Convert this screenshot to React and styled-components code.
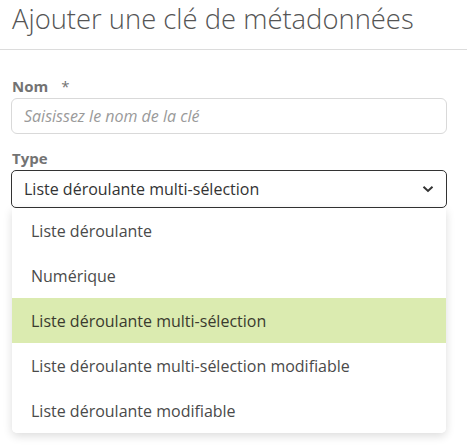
import React, { useState } from "react";
import styled, { createGlobalStyle } from "styled-components";

const GlobalStyle = createGlobalStyle`
  html, body {
    margin: 0;
    padding: 0;
    background: #fff;
  }
  body {
    font-family: "Open Sans", "Liberation Sans", sans-serif;
    color: #444;
  }
`;

const Page = styled.div`
  width: 467px;
  height: 446px;
  overflow: hidden;
  background: #fff;
`;

const Header = styled.div`
  height: 50px;
  border-bottom: 1px solid #dcdcdc;
  padding: 0 12px;
  box-sizing: border-box;
`;

const Title = styled.h1`
  margin: 0;
  font-weight: 300;
  font-size: 27.4px;
  line-height: 38px;
  color: #555;
`;

const Form = styled.div`
  padding: 26px 20px 0 11px;
  display: flex;
  flex-direction: column;
`;

const Field = styled.div`
  display: flex;
  flex-direction: column;
  margin-bottom: ${(p) => p.$gap || 0}px;
`;

const Label = styled.label`
  font-size: 15px;
  font-weight: 700;
  line-height: 20px;
  color: #737373;
  padding-left: 1px;
  margin-bottom: 2px;
`;

const Required = styled.span`
  font-weight: 400;
  margin-left: 13px;
`;

const Input = styled.input`
  height: 36px;
  box-sizing: border-box;
  border: 1px solid #d9d9d9;
  border-radius: 6px;
  padding: 0 12px;
  font-family: inherit;
  font-size: 16px;
  color: #333;
  outline: none;

  &::placeholder {
    color: #9a9a9a;
    font-style: italic;
  }
`;

const SelectWrap = styled.div`
  position: relative;
`;

const SelectBox = styled.div`
  height: 38px;
  box-sizing: border-box;
  border: 1px solid #333;
  border-radius: 5px;
  padding: 0 12px;
  display: flex;
  align-items: center;
  justify-content: space-between;
  font-size: 16px;
  color: #333;
  cursor: pointer;
`;

const Chevron = styled.svg`
  width: 12px;
  height: 8px;
`;

const Menu = styled.ul`
  position: absolute;
  top: 100%;
  left: 1px;
  right: 1px;
  margin: 0;
  padding: 0;
  list-style: none;
  background: #fff;
  border-radius: 0 0 5px 5px;
  box-shadow: 0 3px 10px rgba(0, 0, 0, 0.14);
  overflow: hidden;
`;

const Option = styled.li`
  height: 45px;
  display: flex;
  align-items: center;
  padding: 0 19px;
  font-size: 16px;
  color: ${(p) => (p.$active ? "#3a3a2e" : "#4a4a4a")};
  background: ${(p) => (p.$active ? "#dbebb0" : "#fff")};
`;

const options = [
  "Liste déroulante",
  "Numérique",
  "Liste déroulante multi-sélection",
  "Liste déroulante multi-sélection modifiable",
  "Liste déroulante modifiable",
];

export default function App() {
  const [value] = useState(options[2]);

  return (
    <Page>
      <GlobalStyle />
      <Header>
        <Title>Ajouter une clé de métadonnées</Title>
      </Header>
      <Form>
        <Field $gap={14}>
          <Label>
            Nom<Required>*</Required>
          </Label>
          <Input placeholder="Saisissez le nom de la clé" />
        </Field>
        <Field>
          <Label>Type</Label>
          <SelectWrap>
            <SelectBox>
              <span>{value}</span>
              <Chevron viewBox="0 0 12 8">
                <path
                  d="M1.5 1.8 L6 6 L10.5 1.8"
                  fill="none"
                  stroke="#333"
                  strokeWidth="2"
                />
              </Chevron>
            </SelectBox>
            <Menu>
              {options.map((o) => (
                <Option key={o} $active={o === value}>
                  {o}
                </Option>
              ))}
            </Menu>
          </SelectWrap>
        </Field>
      </Form>
    </Page>
  );
}
